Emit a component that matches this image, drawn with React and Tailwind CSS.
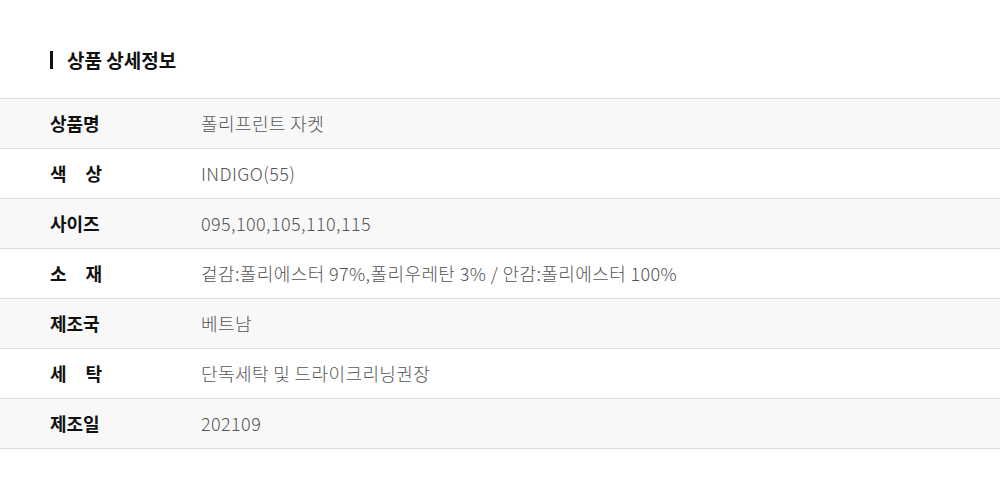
import React from 'react'

const rows = [
  { label: ['상품명'], value: '폴리프린트 자켓' },
  { label: ['색', '상'], value: 'INDIGO(55)' },
  { label: ['사이즈'], value: '095,100,105,110,115' },
  { label: ['소', '재'], value: '겉감:폴리에스터 97%,폴리우레탄 3% / 안감:폴리에스터 100%' },
  { label: ['제조국'], value: '베트남' },
  { label: ['세', '탁'], value: '단독세탁 및 드라이크리닝권장' },
  { label: ['제조일'], value: '202109' },
]

export default function App() {
  return (
    <div
      className="w-[1000px] h-[498px] bg-white"
      style={{ fontFamily: '"Noto Sans CJK KR", "Noto Sans", sans-serif' }}
    >
      <div className="h-[98px] flex items-start pt-[47px] pl-[50px]">
        <span className="w-[3px] h-[18px] bg-[#111] mt-[4px]"></span>
        <h2 className="ml-[14px] text-[19px] leading-[26px] font-bold text-[#111]">
          상품 상세정보
        </h2>
      </div>
      <div className="border-t border-[#dddddd]">
        {rows.map((row, i) => (
          <div
            key={i}
            className={
              'h-[50px] flex items-center border-b border-[#dddddd] ' +
              (i % 2 === 0 ? 'bg-[#f8f8f8]' : 'bg-white')
            }
          >
            <div className="w-[201px] pl-[50px] shrink-0">
              {row.label.length > 1 ? (
                <div className="w-[52px] flex justify-between text-[18px] font-bold text-[#111]">
                  <span>{row.label[0]}</span>
                  <span>{row.label[1]}</span>
                </div>
              ) : (
                <span className="text-[18px] font-bold text-[#111]">
                  {row.label[0]}
                </span>
              )}
            </div>
            <div className="text-[18px] font-light text-[#555] tracking-[0.4px]">
              {row.value}
            </div>
          </div>
        ))}
      </div>
    </div>
  )
}
